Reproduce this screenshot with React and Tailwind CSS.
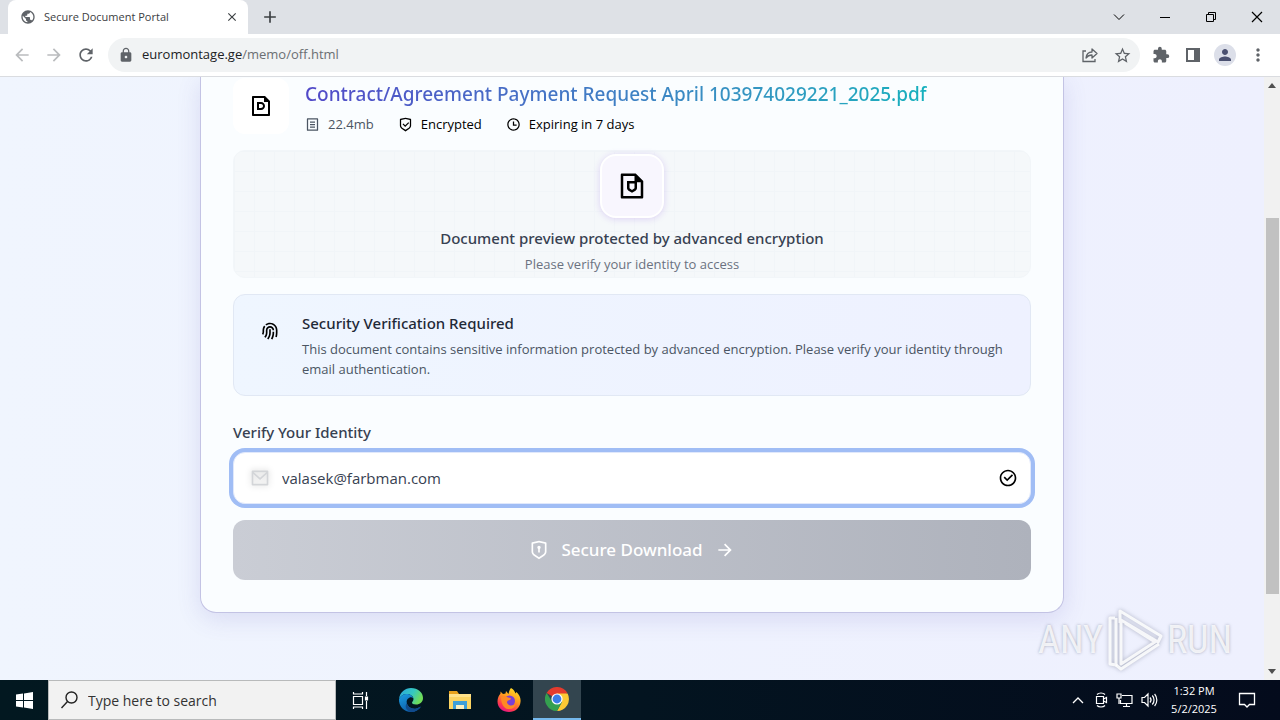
import { useState } from 'react';
import {
    MdArrowBack,
    MdArrowForward,
    MdRefresh,
    MdLock,
    MdStarBorder,
    MdExtension,
    MdPerson,
    MdMoreVert,
    MdPublic,
    MdClose,
    MdAdd,
} from 'react-icons/md';
import {
    RiFilePdfLine,
    RiFileListLine,
    RiShieldCheckLine,
    RiTimeLine,
    RiFileShieldLine,
    RiFingerprintLine,
    RiMailLine,
    RiCheckboxCircleLine,
    RiShieldKeyholeLine,
    RiArrowRightLine,
} from 'react-icons/ri';

const TabStrip = () => (
    <div className="flex h-[34px] items-stretch bg-[#dee1e6] pl-2">
        <div className="flex w-60 items-center rounded-t-lg bg-white pr-2 pl-3 text-[#3c4043]">
            <MdPublic size={16} className="shrink-0 text-[#5f6368]" />
            <span className="ml-2 flex-1 truncate text-[11px]">Secure Document Portal</span>
            <button type="button" aria-label="Close tab" className="p-px">
                <MdClose size={14} />
            </button>
        </div>
        <button type="button" aria-label="New tab" className="ml-3 flex items-center text-[#3c4043]">
            <MdAdd size={20} />
        </button>
        <div className="ml-auto flex items-center text-black">
            <button type="button" aria-label="Search tabs" className="flex h-7 w-[46px] items-center justify-center">
                <svg width="12" height="12" viewBox="0 0 12 12" fill="none" stroke="currentColor">
                    <path d="M1 3.500 6 8.500 11 3.500" />
                </svg>
            </button>
            <button type="button" aria-label="Minimize" className="flex h-7 w-[46px] items-center justify-center">
                <svg width="12" height="12" viewBox="0 0 12 12" stroke="currentColor">
                    <path d="M1 6.500h10" />
                </svg>
            </button>
            <button type="button" aria-label="Restore" className="flex h-7 w-[46px] items-center justify-center">
                <svg width="12" height="12" viewBox="0 0 12 12" fill="none" stroke="currentColor">
                    <path d="M1.500 3.500h7v7h-7zM3.500 3.500v-2h7v7h-2" />
                </svg>
            </button>
            <button type="button" aria-label="Close window" className="flex h-7 w-[46px] items-center justify-center">
                <svg width="12" height="12" viewBox="0 0 12 12" stroke="currentColor" strokeWidth="1.2">
                    <path d="M1 1 11 11M11 1 1 11" />
                </svg>
            </button>
        </div>
    </div>
);

const Toolbar = () => (
    <div className="flex h-[43px] items-center border-b border-[#dadce0] bg-white px-3 text-[#5f6368]">
        <button type="button" aria-label="Back" className="w-8 text-[#babcbe]">
            <MdArrowBack size={20} />
        </button>
        <button type="button" aria-label="Forward" className="w-8 text-[#babcbe]">
            <MdArrowForward size={20} />
        </button>
        <button type="button" aria-label="Reload" className="w-8">
            <MdRefresh size={20} />
        </button>
        <div className="flex h-[34px] flex-1 items-center rounded-full bg-[#f1f3f4] pr-2 pl-2.5">
            <MdLock size={16} />
            <span className="ml-2 flex-1 text-[13px] text-[#6b6f73]">
                <span className="text-[#202124]">euromontage.ge</span>/memo/off.html
            </span>
            <button type="button" aria-label="Share" className="mr-3.5">
                <svg width="18" height="18" viewBox="0 0 18 18" fill="none" stroke="currentColor" strokeWidth="1.3">
                    <path d="M5 5H2v10.500h12V13" />
                    <path d="M5 12c.5-4 3-6 6-6V3l5 4.500-5 4.500V9c-2.500 0-4.500 1-6 3z" strokeLinejoin="round" />
                </svg>
            </button>
            <button type="button" aria-label="Bookmark">
                <MdStarBorder size={19} />
            </button>
        </div>
        <button type="button" aria-label="Extensions" className="ml-3">
            <MdExtension size={18} />
        </button>
        <button type="button" aria-label="Side panel" className="ml-3.5">
            <svg width="18" height="18" viewBox="0 0 18 18">
                <path fill="currentColor" fillRule="evenodd" d="M2 2h14v14H2zM4 4v10h6V4z" />
            </svg>
        </button>
        <button
            type="button"
            aria-label="Profile"
            className="ml-3 flex size-[22px] items-center justify-center rounded-full bg-[#dcdfe9] text-[#4a5070]"
        >
            <MdPerson size={18} />
        </button>
        <button type="button" aria-label="Menu" className="ml-3">
            <MdMoreVert size={20} />
        </button>
    </div>
);

const Scrollbar = () => (
    <div className="flex w-4 flex-col items-center bg-[#f1f1f1]" aria-hidden="true">
        <div className="flex h-[17px] items-center">
            <svg width="8" height="5" viewBox="0 0 8 5">
                <path d="M4 0 8 5H0z" fill="#505050" />
            </svg>
        </div>
        <div className="flex-[124]" />
        <div className="w-[13px] flex-[376] bg-[#c1c1c1]" />
        <div className="flex-[69]" />
        <div className="flex h-[17px] items-center">
            <svg width="8" height="5" viewBox="0 0 8 5">
                <path d="M0 0h8L4 5z" fill="#505050" />
            </svg>
        </div>
    </div>
);

const DocumentHeader = () => (
    <div className="flex gap-4">
        <div className="flex size-14 shrink-0 items-center justify-center rounded-xl bg-white">
            <RiFilePdfLine size={24} />
        </div>
        <div className="pt-0.5">
            <h1 className="w-fit bg-gradient-to-r from-[#5148c8] via-[#3f7fc4] to-[#14b0bd] bg-clip-text font-['Noto_Sans','Open_Sans',sans-serif] text-[19px] leading-7 font-medium whitespace-nowrap text-transparent">
                Contract/Agreement Payment Request April 103974029221_2025.pdf
            </h1>
            <div className="mt-1.5 flex gap-6 text-[13px] leading-5">
                <span className="flex items-center gap-2 text-[#4b5563]">
                    <RiFileListLine size={15} /> 22.4mb
                </span>
                <span className="flex items-center gap-2">
                    <RiShieldCheckLine size={15} /> Encrypted
                </span>
                <span className="flex items-center gap-2">
                    <RiTimeLine size={15} /> Expiring in 7 days
                </span>
            </div>
        </div>
    </div>
);

const Preview = () => (
    <div className="mt-4 flex h-32 flex-col items-center justify-center rounded-xl border border-[#f2f6f9] bg-[#f5f8fa] bg-[linear-gradient(to_right,#f1f5f8_1px,transparent_1px),linear-gradient(to_bottom,#f1f5f8_1px,transparent_1px)] bg-[size:20px_20px]">
        <div className="flex size-16 items-center justify-center rounded-2xl border-2 border-white bg-[#f8f6fe] shadow-[0_1px_7px_rgba(109,40,217,0.18)]">
            <RiFileShieldLine size={30} />
        </div>
        <p className="mt-2 font-['Noto_Sans','Open_Sans',sans-serif] text-[15px] leading-6 font-medium text-[#374151]">
            Document preview protected by advanced encryption
        </p>
        <p className="mt-1 text-[13px] leading-5 text-[#6b7280]">Please verify your identity to access</p>
    </div>
);

const SecurityNotice = () => (
    <div className="mt-4 flex gap-3 rounded-xl border border-[#e1e8f4] bg-gradient-to-r from-[#eff6ff] to-[#eef1ff] p-4">
        <div className="flex size-10 shrink-0 items-center justify-center">
            <RiFingerprintLine size={20} />
        </div>
        <div>
            <h2 className="font-['Noto_Sans','Open_Sans',sans-serif] text-[15px] leading-6 font-medium text-[#1f2937]">
                Security Verification Required
            </h2>
            <p className="mt-1 text-[13px] leading-5 text-[#4b5563]">
                This document contains sensitive information protected by advanced encryption. Please verify your
                identity through email authentication.
            </p>
        </div>
    </div>
);

const VerifyForm = () => {
    const [email, setEmail] = useState('valasek@farbman.com');

    return (
        <form className="mt-6" onSubmit={(e) => e.preventDefault()}>
            <label
                htmlFor="email"
                className="block font-['Noto_Sans','Open_Sans',sans-serif] text-[15px] leading-6 font-medium text-[#374151]"
            >
                Verify Your Identity
            </label>
            <div className="mt-2 flex h-[52px] items-center rounded-xl border border-[#e0e8fb] bg-white px-3 ring-4 ring-[#a0bdf5]">
                <RiMailLine size={20} className="ml-1 text-[#d3d5d8] drop-shadow-[0_0_3px_rgba(0,0,0,0.2)]" />
                <input
                    id="email"
                    type="email"
                    value={email}
                    onChange={(e) => setEmail(e.target.value)}
                    className="ml-3 min-w-0 flex-1 bg-transparent text-[15px] text-[#374151] outline-none"
                />
                <RiCheckboxCircleLine size={20} />
            </div>
            <button
                type="submit"
                className="mt-4 flex h-[60px] w-full items-center justify-center gap-3 rounded-xl bg-gradient-to-r from-[#cacdd5] to-[#aeb2bc] font-['Noto_Sans','Open_Sans',sans-serif] text-[17px] font-medium text-white"
            >
                <RiShieldKeyholeLine size={20} />
                Secure Download
                <RiArrowRightLine size={20} />
            </button>
        </form>
    );
};

const Watermark = () => (
    <div className="pointer-events-none absolute right-8 bottom-2 flex items-center gap-0.5 font-['Roboto_Condensed','Liberation_Sans_Narrow',sans-serif] text-[38px] leading-none text-white/80 [text-shadow:0_0_3px_rgba(90,95,120,0.5)]">
        <span>ANY</span>
        <svg
            width="60"
            height="64"
            viewBox="0 0 60 64"
            fill="none"
            stroke="#fff"
            strokeOpacity=".85"
            strokeWidth="3"
            strokeLinejoin="round"
            className="drop-shadow-[0_0_2px_rgba(90,95,120,0.5)]"
        >
            <path d="M10 10H5v46l6 1V10M15 15V3l41 25-3 6L16 12v44l34-22-30-19" />
            <path d="M11 57 16 61 54 36" />
        </svg>
        <span>RUN</span>
    </div>
);

const EdgeLogo = () => (
    <svg width="26" height="26" viewBox="0 0 26 26">
        <defs>
            <linearGradient id="edgeTop" x1="0" y1="0" x2="1" y2="0.4">
                <stop offset="0" stopColor="#2aa5e0" />
                <stop offset="0.6" stopColor="#35c8c0" />
                <stop offset="1" stopColor="#6fdc58" />
            </linearGradient>
            <linearGradient id="edgeBottom" x1="0" y1="0" x2="0.6" y2="1">
                <stop offset="0" stopColor="#1b9de2" />
                <stop offset="1" stopColor="#0c59a4" />
            </linearGradient>
        </defs>
        <path d="M1 12C2 5 7 1 13 1c7 0 12 4.500 12 10 0 4-3 6.500-7 6.500-3 0-4-1-4-2 0-.8 1.500-1.300 1.500-3.500C15.500 9 12 7 8.500 7 5 7 2.500 9 1 12z" fill="url(#edgeTop)" />
        <path d="M1 12c1.500-3 4-5 7.500-5 3.500 0 6.500 2 6.800 4.500-1-1.300-2.500-1.500-4-.8-2.300 1-3 3-2.500 5.300.8 4 5.200 6.500 9.500 5.500 2-.4 3.700-1.500 4.700-2-2 3.500-5.700 5.500-10 5.500C6 25 .5 19 1 12z" fill="url(#edgeBottom)" />
        <path d="M8.800 16c.8 4 5.200 6.500 9.500 5.500 2-.4 3.700-1.500 4.700-2-2 3.500-5.700 5.500-10 5.500C9 24 6 20 8.800 16z" fill="#114a8b" />
    </svg>
);

const FolderLogo = () => (
    <svg width="22" height="22" viewBox="0 0 22 22">
        <path d="M0 2h8l2 3h11v4H0z" fill="#e8a21c" />
        <path d="M0 5h22v15H0z" fill="#fcd462" />
        <path d="M0 5h22v3H0z" fill="#ffe28a" />
        <path d="M4 12h14v8h-3v-4H7v4H4z" fill="#3f9fd8" />
        <path d="M7 16h8v4H7z" fill="#fdf0c0" />
    </svg>
);

const FirefoxLogo = () => (
    <svg width="24" height="26" viewBox="0 0 24 26">
        <defs>
            <linearGradient id="fox" x1="0.8" y1="0" x2="0.3" y2="1">
                <stop offset="0" stopColor="#ffe226" />
                <stop offset="0.45" stopColor="#ff9a1f" />
                <stop offset="0.8" stopColor="#ff3750" />
                <stop offset="1" stopColor="#e31587" />
            </linearGradient>
        </defs>
        <path d="M14 1c3 1.500 4 4 4.500 5.500l1-1.500C22.500 8 24 11 23.500 15 23 21 18 25 12 25S.5 21 .5 14.500C.5 11 2 8 3.500 6.500V4.500L6 7l2.500-.5L9 4l2.500 3C12 4.500 12.500 2.500 14 1z" fill="url(#fox)" />
        <circle cx="12.500" cy="14" r="5.500" fill="#7b3fd6" />
        <path d="M4 10c3-2 5.500-1 7 .5 2 .3 3 .8 3 1.500-1 1.500-4 1-4 3.500 1 3.500 6 4 9 1-1 4-4 6-8 5.500C7 21.500 4 17 4 10z" fill="#ff8a24" />
    </svg>
);

const ChromeLogo = () => (
    <svg width="24" height="24" viewBox="0 0 24 24">
        <path d="M12 12 1.600 6A12 12 0 0 1 22.400 6z" fill="#e33b2e" />
        <path d="M12 6.500h10.600A12 12 0 0 1 12 24l5-9z" fill="#fcc934" />
        <path d="m7.200 14.700-5.600-8.700A12 12 0 0 0 12 24l4.800-9z" fill="#34a04f" />
        <circle cx="12" cy="12" r="5.600" fill="#fff" />
        <circle cx="12" cy="12" r="4.400" fill="#3b7de8" />
    </svg>
);

const Taskbar = () => (
    <footer className="flex h-10 shrink-0 items-stretch bg-gradient-to-r from-[#021820] via-[#031420] to-[#040b1c] text-white">
        <button type="button" aria-label="Start" className="flex w-12 items-center justify-center">
            <svg width="17" height="17" viewBox="0 0 17 17" fill="#fff">
                <path d="M0 2.500 7 1.500V8H0zM8 1.400 17 0v8H8zM0 9h7v6.500l-7-1zM8 9h9v8l-9-1.400z" />
            </svg>
        </button>
        <label className="flex w-72 items-center border border-[#b8babb] bg-[#f2f2f2] pl-3 text-[#222]">
            <svg width="17" height="18" viewBox="0 0 17 18" fill="none" stroke="currentColor" strokeWidth="1.4">
                <circle cx="10.500" cy="6.500" r="5.500" />
                <path d="M6.500 10.500 0.500 17" />
            </svg>
            <input
                type="text"
                aria-label="Search"
                placeholder="Type here to search"
                className="ml-2.5 min-w-0 flex-1 bg-transparent text-[14px] outline-none placeholder:text-[#333]"
            />
        </label>
        <button type="button" aria-label="Task view" className="flex w-12 items-center justify-center">
            <svg width="17" height="17" viewBox="0 0 17 17" fill="none" stroke="#fff" strokeWidth="1.2">
                <path d="M1.500 4.500h9v8h-9zM1.500 0v2h9V0M1.500 17v-2h9v2M14.500 0v4M14.500 9v8" />
                <path d="M13.500 5h2v3h-2z" fill="#fff" />
            </svg>
        </button>
        <div className="ml-0.5 flex">
            <button type="button" aria-label="Edge" className="flex w-[49px] items-center justify-center">
                <EdgeLogo />
            </button>
            <button type="button" aria-label="File Explorer" className="flex w-[49px] items-center justify-center">
                <FolderLogo />
            </button>
            <button type="button" aria-label="Firefox" className="flex w-[49px] items-center justify-center">
                <FirefoxLogo />
            </button>
            <button
                type="button"
                aria-label="Chrome"
                className="flex w-12 items-center justify-center border-b-2 border-[#76b9ed] bg-[#33454f]"
            >
                <ChromeLogo />
            </button>
        </div>
        <div className="ml-auto flex items-center">
            <div className="flex items-center gap-2.5">
                <svg width="12" height="8" viewBox="0 0 12 8" fill="none" stroke="#fff" strokeWidth="1.3">
                    <path d="M1 7 6 2l5 5" />
                </svg>
                <svg width="14" height="18" viewBox="0 0 14 18" fill="none" stroke="#fff" strokeWidth="1.2">
                    <path d="M2.500 5.500h7v7h-7zM9.500 8l3-1.500v5l-3-1.500M3 3.500c2-2 6-2 8 0M3 14.500c2 2 6 2 8 0" />
                </svg>
            </div>
            <div className="ml-2 flex items-center gap-2">
                <svg width="17" height="16" viewBox="0 0 17 16" fill="none" stroke="#fff" strokeWidth="1.2">
                    <path d="M6 3.500h10v8H4.500V8M7 14.500h7M10.500 11.500v3M1 2h4v4H1zM3 6v6" />
                </svg>
                <svg width="17" height="16" viewBox="0 0 17 16" fill="none" stroke="#fff" strokeWidth="1.2">
                    <path d="M1 5.500h2.500L7 2v12l-3.500-3.500H1zM9 5.500c1.300 1.500 1.300 3.500 0 5M11.300 3.500c2.300 2.500 2.300 6.500 0 9M13.600 2c3 3.500 3 8.500 0 12" />
                </svg>
            </div>
            <div className="ml-2 w-14 text-center text-[11px] leading-[18px]">
                <div>1:32 PM</div>
                <div>5/2/2025</div>
            </div>
            <button type="button" aria-label="Notifications" className="mr-6 ml-4">
                <svg width="18" height="18" viewBox="0 0 18 18" fill="none" stroke="#fff" strokeWidth="1.300">
                    <path d="M1.500 2.500h15v11h-5L9 16l-2.500-2.500h-5z" />
                </svg>
            </button>
        </div>
    </footer>
);

const App = () => (
    <div className="flex h-screen flex-col overflow-hidden font-['Open_Sans','Noto_Sans',sans-serif]">
        <header>
            <TabStrip />
            <Toolbar />
        </header>
        <div className="flex min-h-0 flex-1">
            <main className="relative min-w-0 flex-1 overflow-hidden bg-gradient-to-r from-[#f0f5fe] to-[#eef0fe]">
                <div className="mx-auto max-w-[864px] rounded-b-2xl border border-t-0 border-[#c3c3e4] bg-[#fafdff] px-8 pt-px pb-8 text-black shadow-[0_6px_24px_rgba(80,70,180,0.14)]">
                    <DocumentHeader />
                    <Preview />
                    <SecurityNotice />
                    <VerifyForm />
                </div>
                <Watermark />
            </main>
            <Scrollbar />
        </div>
        <Taskbar />
    </div>
);

export default App;
